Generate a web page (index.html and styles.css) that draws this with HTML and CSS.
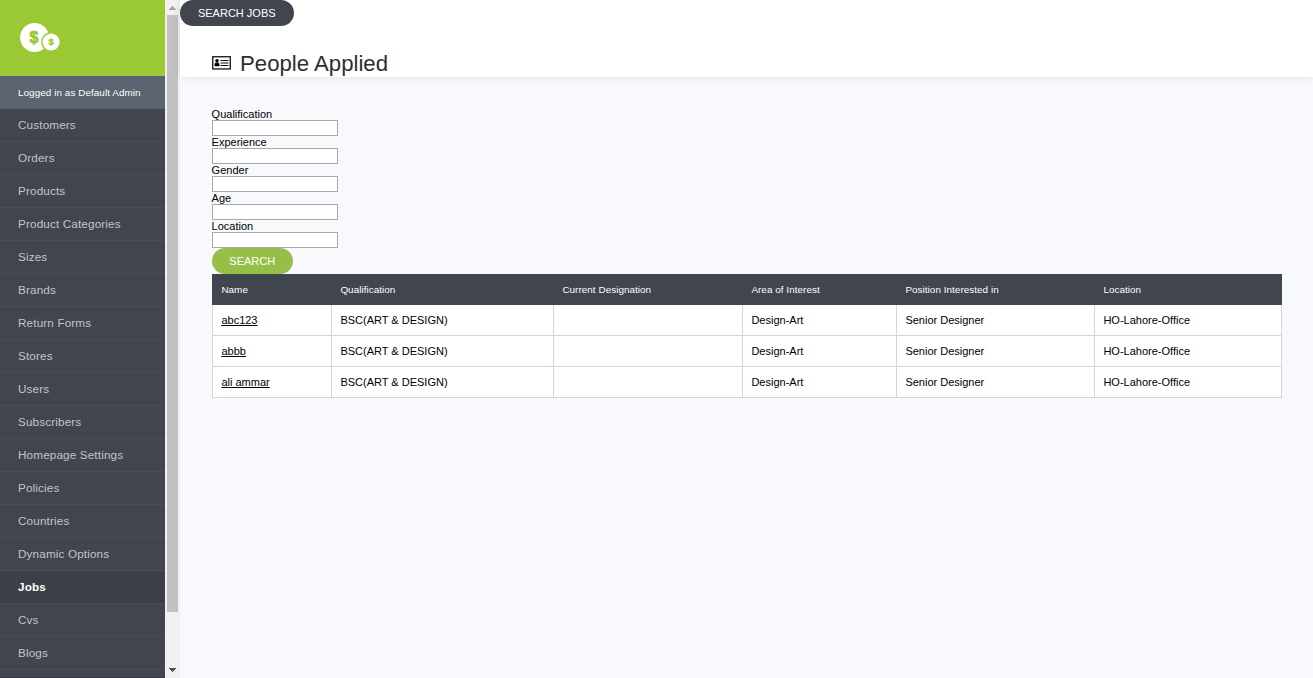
FILE: index.html
```html
<!DOCTYPE html>
<html lang="en">
<head>
<meta charset="utf-8">
<title>People Applied</title>
<link rel="stylesheet" href="styles.css">
</head>
<body>
<aside class="sidebar">
  <div class="brand">
    <svg width="42" height="32" viewBox="0 0 42 32">
      <circle cx="14.6" cy="15.5" r="14.5" fill="#fff"/>
      <circle cx="31.1" cy="20" r="10" fill="#9ac933"/>
      <circle cx="31.1" cy="20" r="8.6" fill="#fff"/>
      <text class="coin coin-large" x="14" y="20.8" text-anchor="middle">$</text>
      <text class="coin coin-small" x="31.2" y="23.4" text-anchor="middle">$</text>
    </svg>
  </div>
  <div class="account">Logged in as Default Admin</div>
  <nav class="menu">
    <a>Customers</a>
    <a>Orders</a>
    <a>Products</a>
    <a>Product Categories</a>
    <a>Sizes</a>
    <a>Brands</a>
    <a>Return Forms</a>
    <a>Stores</a>
    <a>Users</a>
    <a>Subscribers</a>
    <a>Homepage Settings</a>
    <a>Policies</a>
    <a>Countries</a>
    <a>Dynamic Options</a>
    <a class="active">Jobs</a>
    <a>Cvs</a>
    <a>Blogs</a>
  </nav>
  <div class="menu-end"></div>
</aside>
<div class="scrollbar">
  <svg class="arrow" width="15" height="15" shape-rendering="crispEdges"><path d="M7 6h1v1h1v1h1v1h1v1H4V9h1V8h1V7h1z" fill="#a3a3a3"/></svg>
  <div class="thumb"></div>
  <svg class="arrow" width="15" height="15" shape-rendering="crispEdges"><path d="M4 5h7v1h-1v1H9v1H8v1H7V8H6V7H5V6H4z" fill="#505050"/></svg>
</div>
<main class="page">
  <header class="page-header">
    <button class="button button-dark">SEARCH JOBS</button>
    <h1 class="title">
      <svg width="19" height="14" viewBox="0 0 19 14">
        <rect x=".75" y=".75" width="17.5" height="12.2" fill="#fff" stroke="#111" stroke-width="1.3"/>
        <circle cx="5" cy="4.8" r="1.7"/>
        <path d="M2.6 10.3V8.2q0-1.6 1.4-1.6h2q1.4 0 1.4 1.6v2.1z"/>
        <path d="M8.5 4.5h8M8.5 7h8M8.5 9.5h8" stroke="#111" stroke-width="1.1"/>
      </svg>
      <span>People Applied</span>
    </h1>
  </header>
  <section class="content">
    <form class="filters">
      <label>Qualification<input type="text"></label>
      <label>Experience<input type="text"></label>
      <label>Gender<input type="text"></label>
      <label>Age<input type="text"></label>
      <label>Location<input type="text"></label>
      <button class="button button-green" type="button">SEARCH</button>
    </form>
    <table class="people">
      <colgroup><col class="c-name"><col class="c-qual"><col class="c-desig"><col class="c-area"><col class="c-pos"><col class="c-loc"></colgroup>
      <thead>
        <tr><th>Name</th><th>Qualification</th><th>Current Designation</th><th>Area of Interest</th><th>Position Interested in</th><th>Location</th></tr>
      </thead>
      <tbody>
        <tr><td><a>abc123</a></td><td>BSC(ART &amp; DESIGN)</td><td></td><td>Design-Art</td><td>Senior Designer</td><td>HO-Lahore-Office</td></tr>
        <tr><td><a>abbb</a></td><td>BSC(ART &amp; DESIGN)</td><td></td><td>Design-Art</td><td>Senior Designer</td><td>HO-Lahore-Office</td></tr>
        <tr><td><a>ali ammar</a></td><td>BSC(ART &amp; DESIGN)</td><td></td><td>Design-Art</td><td>Senior Designer</td><td>HO-Lahore-Office</td></tr>
      </tbody>
    </table>
  </section>
</main>
<div class="edge"></div>
</body>
</html>
```
FILE: styles.css
```css
* { box-sizing: border-box; }
body {
  margin: 0;
  height: 678px;
  display: flex;
  overflow: hidden;
  font: 11px/14px "Liberation Sans", Arial, sans-serif;
  color: #000;
  background: #f8f9fd;
}
svg { display: block; }

.sidebar {
  width: 165px;
  flex: none;
  display: flex;
  flex-direction: column;
  background: #41454e;
}
.brand { height: 76px; padding: 22px 0 0 20px; background: #9ac933; }
.coin { font-family: "Liberation Sans", Arial, sans-serif; font-weight: bold; fill: #9ac933; stroke: #9ac933; stroke-width: .7px; }
.coin-large { font-size: 16px; }
.coin-small { font-size: 9.5px; stroke-width: .4px; }
.account { height: 33px; padding-left: 18px; line-height: 33px; font-size: 9.9px; letter-spacing: .07px; color: #fff; background: #5c6370; }
.menu a {
  display: block;
  height: 33px;
  padding-left: 18px;
  font-size: 11.7px;
  letter-spacing: .15px;
  line-height: 32px;
  color: #c3c4c6;
  border-bottom: 1px solid #4a4e57;
}
.menu .active { color: #fff; font-weight: bold; background: #3b3f47; }
.menu-end { margin-top: auto; height: 1px; background: #43304a; }

.scrollbar { width: 15px; flex: none; display: flex; flex-direction: column; background: #f1f1f1; }
.thumb { height: 597px; margin: 0 2px; background: #c1c1c1; }
.scrollbar .arrow:last-child { margin-top: auto; }

.page { flex: 1; }
.page-header { height: 77px; background: #fff; box-shadow: 0 0 8px rgba(0, 0, 0, .1); }
.button {
  display: block;
  height: 26px;
  padding: 0 .5px 0 0;
  border: 0;
  border-radius: 13px;
  font: 11px "Liberation Sans", Arial, sans-serif;
  color: #fff;
}
.button-dark { width: 114px; background: #41454e; }
.button-green { width: 81px; background: #96bf48; }
.title {
  display: flex;
  align-items: center;
  gap: 9px;
  margin: 24px 0 0 32px;
  font-size: 22.2px;
  line-height: 27px;
  font-weight: normal;
  color: #2b2e35;
}
.title svg { margin-bottom: 2px; }

.content { padding: 31px 31px 0 32px; }
.filters label { display: block; line-height: 12px; text-indent: -.4px; }
.filters input {
  display: block;
  width: 126px;
  height: 16px;
  padding: 0;
  border: 1px solid #a9a9a9;
  background: #fff;
}

.people { width: 1070px; table-layout: fixed; border-collapse: separate; border-spacing: 0; }
.c-name { width: 120px; }
.c-qual { width: 222px; }
.c-desig { width: 189px; }
.c-area { width: 154px; }
.c-pos { width: 198px; }
.c-loc { width: 187px; }
.people th, .people td { height: 31px; padding: 0 8px; text-align: left; text-indent: .4px; }
.people th { font-size: 9.9px; letter-spacing: .05px; font-weight: normal; color: #fff; background: #41454e; }
.people th:first-child { padding-left: 9px; }
.people td { background: #fff; border: solid #d1d5de; border-width: 0 1px 1px 0; }
.people td:first-child { border-left-width: 1px; }
.people td a { text-decoration: underline; }

.edge {
  width: 1px;
  flex: none;
  position: relative;
  background: linear-gradient(#9ac933 76px, #5c6370 76px, #5c6370 109px, #41454e 109px);
}
```
